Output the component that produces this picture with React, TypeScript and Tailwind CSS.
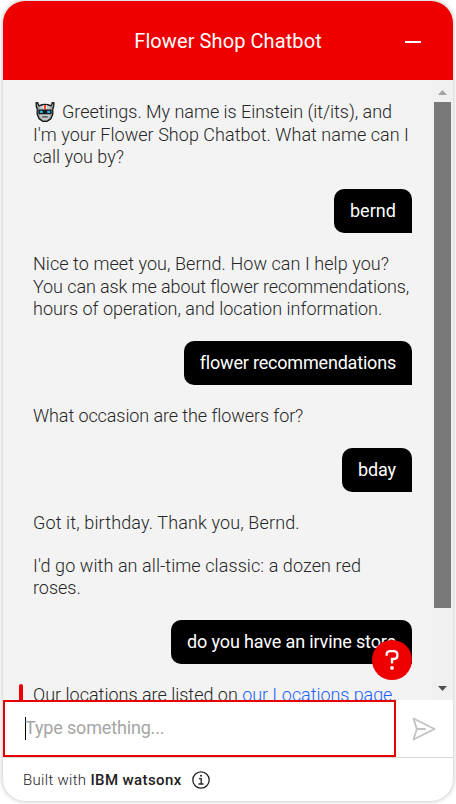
import type { ReactNode } from 'react';

function RobotFace() {
  return (
    <svg className="ml-[2px] mr-[7px] inline-block h-[20px] w-[20px] align-[-4px]" viewBox="0 0 20 20" role="img" aria-label="Robot">
      <path d="M1 .8 2.6.5 4 3.800Q10 1.200 16 3.800L17.400.5 19 .8 18.600 4.800 17.800 7v5.300l-1.800 4.300-3.700 2.700H7.700L4 16.600 2.200 12.300V7L1.400 4.800Z" fill="#97999b" stroke="#17191a" strokeWidth="1.300" strokeLinejoin="round" />
      <path d="M4.600 4.600Q10 2.200 15.400 4.600V7.400H4.600Z" fill="#c5c7c8" />
      <path d="M4.300 12h11.400l-1.200 3.500-2.400 2.500H7.900l-2.400-2.500Z" fill="#c3c5c6" />
      <rect x="8.200" y="3" width="3.600" height="4.400" fill="#f4f4f4" />
      <rect x="9" y="3" width="2" height="4.400" fill="#ee4427" />
      <rect x="3.400" y="7.600" width="13.200" height="4.600" rx=".8" fill="#151719" />
      <path d="M4.800 8.800h3v2.200h-3zM12.200 8.800h3v2.200h-3z" fill="#15b7e8" />
      <path d="M7.200 14.900h5.600" stroke="#404244" strokeWidth="1.300" />
    </svg>
  );
}

function BotText({ children }: { children: ReactNode }) {
  return <div className="whitespace-pre">{children}</div>;
}

function UserBubble({ children }: { children: ReactNode }) {
  return (
    <div className="flex h-[44px] shrink-0 items-center self-end whitespace-pre rounded-[10px] rounded-br-none bg-black px-4 pt-px font-normal text-white">
      {children}
    </div>
  );
}

export default function App() {
  return (
    <div className="h-[804px] w-[456px] overflow-hidden bg-white pl-[3px] pt-px font-['Roboto',sans-serif]">
      <div className="flex h-[800px] w-[450px] flex-col overflow-hidden rounded-[22px] bg-white shadow-[0_0_4px_1px_rgba(0,0,0,0.2)]">
        <header className="grid h-[79px] shrink-0 grid-cols-[80px_1fr_80px] items-center bg-[#ee0000] text-white">
          <span />
          <h1 className="whitespace-pre text-center text-[20px] leading-6 tracking-[0.09px]">Flower Shop Chatbot</h1>
          <button className="flex items-center justify-center pt-[2px]" aria-label="Minimize">
            <span className="h-[2px] w-4 bg-white" />
          </button>
        </header>

        <main className="relative flex h-[620px] shrink-0 overflow-hidden bg-[#f3f3f3]">
          <div className="ml-4 flex w-[393px] shrink-0 flex-col gap-[20.2px] pl-[14px] pt-[21.3px] text-[18px] font-light leading-[22.5px] text-[#262626]">
            <BotText>
              <div className="h-[22.5px] tracking-[-0.03px]"><RobotFace />Greetings. My name is Einstein (it/its), and</div>
              <div className="tracking-[0.04px]">I'm your Flower Shop Chatbot. What name can I</div>
              <div className="tracking-[0.014px]">call you by?</div>
            </BotText>
            <UserBubble><span className="tracking-[0.05px]">bernd</span></UserBubble>
            <BotText>
              <div className="tracking-[0.061px]">Nice to meet you, Bernd. How can I help you?</div>
              <div className="tracking-[-0.096px]">You can ask me about flower recommendations,</div>
              <div>hours of operation, and location information.</div>
            </BotText>
            <UserBubble><span className="tracking-[-0.19px]">flower recommendations</span></UserBubble>
            <BotText><div className="tracking-[-0.087px]">What occasion are the flowers for?</div></BotText>
            <UserBubble><span className="tracking-[-0.1px]">bday</span></UserBubble>
            <BotText><div className="tracking-[0.13px]">Got it, birthday. Thank you, Bernd.</div></BotText>
            <BotText>
              <div className="tracking-[0.083px]">I'd go with an all-time classic: a dozen red</div>
              <div className="tracking-[-0.02px]">roses.</div>
            </BotText>
            <UserBubble><span className="tracking-[-0.14px]">do you have an irvine store</span></UserBubble>
            <div className="-ml-[14px] flex shrink-0">
              <span className="h-10 w-1 rounded-t-[2px] bg-[#ee0000]" />
              <p className="whitespace-pre pl-[10px]">
                Our locations are listed on <a className="tracking-[-0.06px] text-[#1f62fe]">our Locations page</a>.
              </p>
            </div>
          </div>

          <div className="ml-auto flex w-[21px] shrink-0 flex-col items-center bg-[#f0f0f0] pr-px">
            <svg className="mt-[10px] h-[5px] w-[9px] shrink-0" viewBox="0 0 9 5"><path d="M0 5 4.500 0 9 5Z" fill="#a3a3a3" /></svg>
            <div className="mt-[7px] h-[506px] w-[17px] shrink-0 bg-[#787878]" />
            <svg className="mt-[78px] h-[5px] w-[9px] shrink-0" viewBox="0 0 9 5"><path d="M0 0h9L4.500 5Z" fill="#505050" /></svg>
          </div>

          <button className="absolute bottom-[20px] right-[41px] flex h-10 w-10 items-center justify-center rounded-full bg-[#ee0000]" aria-label="Help">
            <svg className="h-5 w-[14px]" viewBox="0 0 14 20" fill="none">
              <path d="M1.600 5.800V5Q1.600 1.200 5.200 1.200h3.300Q12.400 1.200 12.400 5v.6Q12.400 9 8.800 9H7V13.500" stroke="white" strokeWidth="2.300" />
              <circle cx="7" cy="17.900" r="1.900" fill="white" />
            </svg>
          </button>
        </main>

        <section className="flex h-[58px] shrink-0 border-b border-[#d8d8d8]">
          <div className="flex h-[57px] w-[393px] items-center border-2 border-[#e60000] pl-5">
            <span className="h-[23px] w-px bg-black" />
            <span className="-ml-px whitespace-pre pb-[2px] text-[18px] font-normal leading-6 tracking-[-0.16px] text-[#a5a5a5]">Type something...</span>
          </div>
          <button className="flex h-[57px] flex-1 items-center justify-center pr-[2px]" aria-label="Send">
            <svg className="h-6 w-6" viewBox="0 0 24 24" fill="none" stroke="#c2c2c2" strokeWidth="1.800" strokeLinejoin="round">
              <path d="M1.500 1.500 22.500 12 1.500 22.500 4.800 12ZM4.800 12h9" />
            </svg>
          </button>
        </section>

        <footer className="flex flex-1 items-center pl-5 text-[15px] leading-5 text-[#222222]">
          <span className="whitespace-pre font-light tracking-[0.3px]">Built with </span>
          <strong className="whitespace-pre font-medium tracking-[0.4px]">IBM watsonx</strong>
          <svg className="ml-[10px] h-[18px] w-[18px]" viewBox="0 0 18 18" fill="none" stroke="#222222" strokeWidth="1.300">
            <circle cx="9" cy="9" r="8.200" />
            <path d="M7 7.600h2.200v5.400M6.500 13h5" />
            <circle cx="9" cy="4.800" r="1" fill="#222222" stroke="none" />
          </svg>
        </footer>
      </div>
    </div>
  );
}
